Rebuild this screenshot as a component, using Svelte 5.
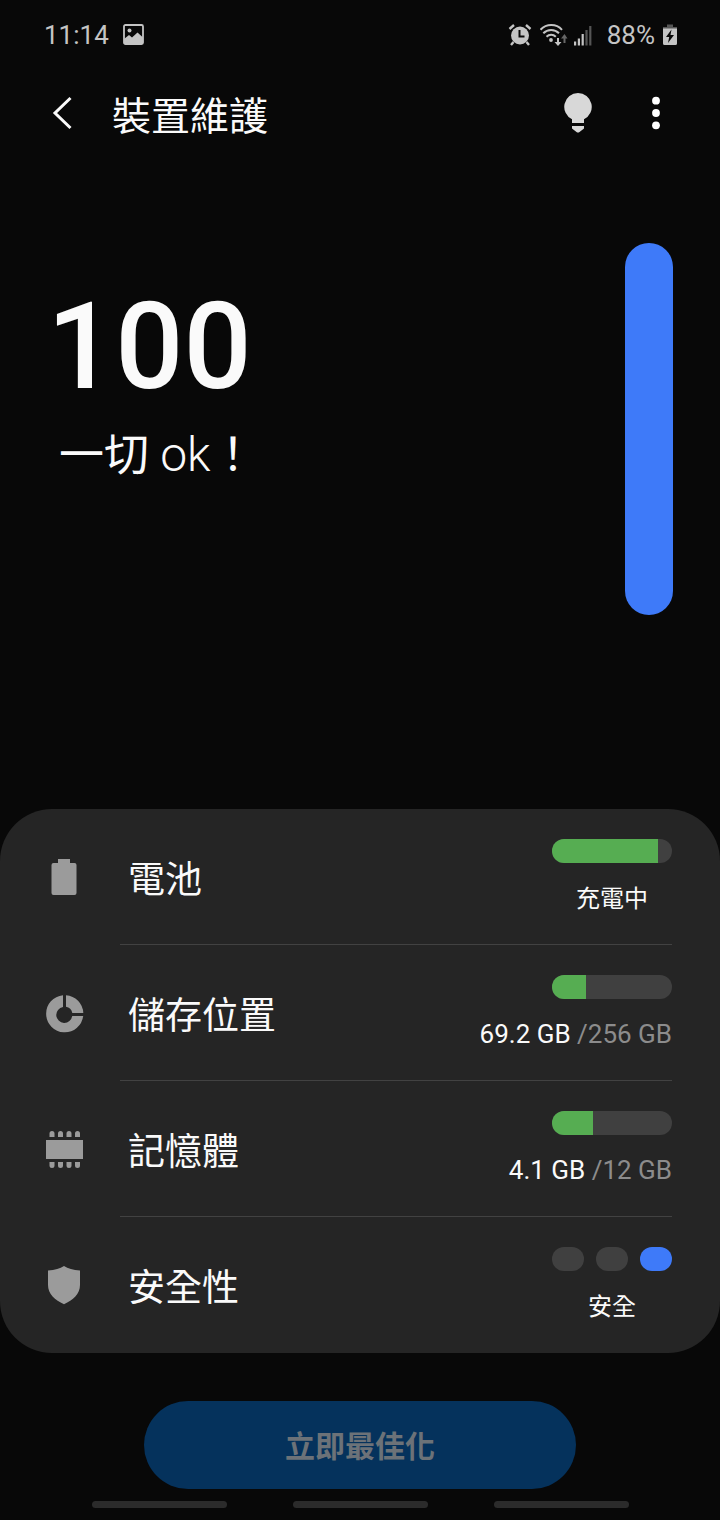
<script lang="ts">
  interface Item {
    id: string;
    label: string;
    icon: 'battery' | 'storage' | 'memory' | 'shield';
    percent?: number;
    level?: number;
    used?: string;
    total?: string;
    status?: string;
  }

  const items: Item[] = [
    { id: 'battery', label: '電池', icon: 'battery', percent: 88, status: '充電中' },
    { id: 'storage', label: '儲存位置', icon: 'storage', percent: 28, used: '69.2 GB', total: '256 GB' },
    { id: 'memory', label: '記憶體', icon: 'memory', percent: 34, used: '4.1 GB', total: '12 GB' },
    { id: 'security', label: '安全性', icon: 'shield', level: 2, status: '安全' },
  ];

  let score = $state(100);
  let optimized = $derived(score === 100);
</script>

<div class="screen">
  <div class="statusbar">
    <span>11:14</span>
    <svg class="picture" width="22" height="22" viewBox="0 0 22 22">
      <rect x="1" y="1" width="19" height="19" rx="1.5" fill="none" stroke="#c4c4c4" stroke-width="1.8" />
      <circle cx="6.5" cy="6.6" r="2" fill="#c4c4c4" />
      <path d="M1 15l5-4 3 2.500 5.500-5 5.500 5V20H1z" fill="#c4c4c4" />
    </svg>
    <span class="spacer"></span>
    <svg width="24" height="24" viewBox="0 0 24 24">
      <circle cx="12" cy="12.500" r="9" fill="#c4c4c4" />
      <path d="M11.500 7v6.500h5" fill="none" stroke="#080808" stroke-width="2" />
      <path d="M1.500 6l4.500-4M22.500 6l-4.500-4M5.500 19L3 22M18.500 19l2.500 3" stroke="#c4c4c4" stroke-width="2.400" />
    </svg>
    <svg class="wifi" width="28" height="24" viewBox="0 0 28 24">
      <g fill="none" stroke="#c4c4c4" stroke-width="2">
        <path d="M0.500 6.800A14.500 14.500 0 0 1 22 6.800" />
        <path d="M3.300 10.300A11 11 0 0 1 19 10.300" />
        <path d="M6.500 13.700A6.800 6.800 0 0 1 15.800 13.700" />
      </g>
      <circle cx="11" cy="17" r="1.900" fill="#c4c4c4" />
      <path d="M17 15h2v4h2.500L18 23l-3.500-4H17z" fill="#c4c4c4" />
      <path d="M23.500 20h2v-4.500h2L24.500 11l-3.500 4.500h2.500z" fill="#666" />
    </svg>
    <svg width="20" height="24" viewBox="0 0 20 24">
      <path d="M1 18.500h2.200V22.500H1zM4.800 15.500H7V22.500H4.800zM8.600 11h2.200v11.500H8.600z" fill="#c4c4c4" />
      <path d="M12.400 7h2.200v15.500h-2.200zM16.200 3h2.200v19.500h-2.200z" fill="#555" />
    </svg>
    <span class="level">88%</span>
    <svg width="14" height="24" viewBox="0 0 14 24">
      <path d="M4 1.500h6V4h4v2H0V4h4z" fill="#555" />
      <path d="M0 5.500h14v15a1.500 1.500 0 0 1-1.500 1.500h-11A1.500 1.500 0 0 1 0 20.500z" fill="#c4c4c4" />
      <path d="M8.500 6.500L3 14h3.200L5 20l6-8H7.500z" fill="#080808" />
    </svg>
  </div>

  <header>
    <button class="icon-btn" aria-label="返回">
      <svg width="28" height="36" viewBox="0 0 28 36">
        <path d="M20.500 3L5 18l15.500 15" fill="none" stroke="#fafafa" stroke-width="3" />
      </svg>
    </button>
    <h1>裝置維護</h1>
    <button class="icon-btn" aria-label="提示">
      <svg width="28" height="40" viewBox="0 0 28 40">
        <path d="M14 0a13.800 13.800 0 0 1 6 26.200V30H8v-3.800A13.800 13.800 0 0 1 14 0zM8 33h12v2.500L15.500 39a2.500 2.500 0 0 1-3 0L8 35.500z" fill="#d8d8d8" />
      </svg>
    </button>
    <button class="icon-btn" aria-label="更多選項">
      <svg width="8" height="36" viewBox="0 0 8 36">
        <g fill="#fff">
          <circle cx="4" cy="5.700" r="3.900" />
          <circle cx="4" cy="18" r="3.900" />
          <circle cx="4" cy="30.300" r="3.900" />
        </g>
      </svg>
    </button>
  </header>

  <section class="hero">
    <div>
      <div class="score">{score}</div>
      <p class="message">一切 <span class="latin">ok</span>！</p>
    </div>
    <div class="gauge">
      <div class="gauge-fill" style="height: {score}%"></div>
    </div>
  </section>

  <ul class="card">
    {#each items as item (item.id)}
      <li>
        <button class="row">
          <svg width="40" height="40" viewBox="0 0 40 40" fill="#9b9b9b">
            {#if item.icon === 'battery'}
              <path d="M14 2h12v4h4.500a2 2 0 0 1 2 2v28a2 2 0 0 1-2 2h-21a2 2 0 0 1-2-2V8a2 2 0 0 1 2-2H14z" />
            {:else if item.icon === 'storage'}
              <path d="M19 2.200V14a8 8 0 1 0 9.200 9h11A18.600 18.600 0 1 1 19 2.200z" />
              <path d="M22 2.200A18.600 18.600 0 0 1 39.300 20H28.300A8 8 0 0 0 22 13.800z" />
            {:else if item.icon === 'memory'}
              <rect x="2" y="11" width="37" height="19" />
              {#each [5.5, 14, 22.5, 31] as x}
                <path d="M{x} 8V4.500a2.500 2.500 0 0 1 5 0V8zM{x} 33v3.500a2.500 2.500 0 0 0 5 0V33z" />
              {/each}
            {:else}
              <path d="M20 1c4 2.500 9 4 16 4.500V20c0 9-7 15-16 19.200C11 35 4 29 4 20V5.500C11 5 16 3.500 20 1z" />
            {/if}
          </svg>
          <span class="label">{item.label}</span>
          <span class="info">
            {#if item.percent !== undefined}
              <span class="bar"><span class="bar-fill" style="width: {item.percent}%"></span></span>
            {:else}
              <span class="levels">
                {#each [0, 1, 2] as n}
                  <span class="pill" class:active={n === item.level}></span>
                {/each}
              </span>
            {/if}
            {#if item.used}
              <span class="value">{item.used} <span class="total">/{item.total}</span></span>
            {:else}
              <span class="value status">{item.status}</span>
            {/if}
          </span>
        </button>
      </li>
    {/each}
  </ul>

  <button class="optimize" disabled={optimized}>立即最佳化</button>

  <div class="gestures">
    <span></span>
    <span></span>
    <span></span>
  </div>
</div>

<style>
  :global(body) {
    background: #080808;
  }
  .screen {
    min-height: 100vh;
    box-sizing: border-box;
    display: flex;
    flex-direction: column;
    background: #080808;
    color: #fafafa;
    font-family: Roboto, "Noto Sans CJK TC", sans-serif;
  }
  button {
    font: inherit;
    color: inherit;
    background: none;
    border: none;
    padding: 0;
    cursor: pointer;
  }
  svg {
    display: block;
    flex: none;
  }

  .statusbar {
    display: flex;
    align-items: center;
    height: 70px;
    padding: 0 43px 0 44px;
    color: #c4c4c4;
    font-size: 26px;
  }
  .picture {
    margin-left: 14px;
  }
  .spacer {
    flex: 1;
  }
  .wifi {
    margin: 0 5px 0 8px;
  }
  .level {
    margin: 0 8px 0 14px;
  }

  header {
    display: flex;
    align-items: center;
    height: 86px;
    padding: 0 40px;
  }
  .icon-btn {
    display: flex;
    align-items: center;
    justify-content: center;
    width: 48px;
    height: 48px;
  }
  .icon-btn + .icon-btn {
    margin-left: 30px;
  }
  h1 {
    flex: 1;
    margin: 0 0 0 24px;
    padding-top: 8px;
    font-size: 39px;
    font-weight: 400;
    line-height: 56px;
  }
  h1 + .icon-btn {
    margin-right: 0;
  }

  .hero {
    display: flex;
    justify-content: space-between;
    padding: 87px 47px 194px;
  }
  .score {
    margin-top: 44px;
    font-size: 120px;
    font-weight: 500;
    line-height: 120px;
  }
  .message {
    margin: 18px 0 0 12px;
    font-size: 45px;
    line-height: 60px;
  }
  .latin {
    font-size: 48px;
    font-weight: 300;
  }
  .gauge {
    display: flex;
    align-items: flex-end;
    width: 48px;
    height: 372px;
    border-radius: 24px;
    background: #404040;
    overflow: hidden;
  }
  .gauge-fill {
    width: 100%;
    background: #3e7af9;
  }

  .card {
    margin: 0;
    padding: 0;
    list-style: none;
    background: #252525;
    border-radius: 52px;
  }
  .row {
    position: relative;
    display: flex;
    align-items: center;
    width: 100%;
    height: 136px;
    padding: 0 48px 0 44px;
    text-align: left;
  }
  li + li .row::before {
    content: "";
    position: absolute;
    top: -1px;
    left: 120px;
    right: 48px;
    height: 1px;
    background: #424242;
  }
  .label {
    flex: 1;
    margin-left: 44px;
    padding-top: 8px;
    font-size: 37px;
    line-height: 56px;
  }
  .info {
    display: flex;
    flex-direction: column;
    align-items: flex-end;
    gap: 16px;
  }
  .bar {
    width: 120px;
    height: 24px;
    border-radius: 12px;
    background: #404040;
    overflow: hidden;
  }
  .bar-fill {
    display: block;
    height: 100%;
    background: #56ad52;
  }
  .levels {
    display: flex;
    gap: 12px;
  }
  .pill {
    width: 32px;
    height: 24px;
    border-radius: 12px;
    background: #404040;
  }
  .pill.active {
    background: #3e7af9;
  }
  .value {
    box-sizing: border-box;
    min-width: 120px;
    height: 36px;
    font-size: 26px;
    line-height: 38px;
    text-align: center;
    white-space: nowrap;
  }
  .status {
    font-size: 24px;
    line-height: 40px;
  }
  .total {
    color: #8c8c8c;
  }

  .optimize {
    align-self: center;
    width: 60%;
    height: 88px;
    margin-top: 48px;
    padding-bottom: 2px;
    border-radius: 44px;
    background: #05325c;
    font-size: 30px;
    font-weight: 700;
  }
  .optimize:disabled {
    color: #6c7278;
    cursor: default;
  }

  .gestures {
    display: flex;
    justify-content: center;
    gap: 66px;
    padding: 12px 0;
  }
  .gestures span {
    width: 135px;
    height: 7px;
    border-radius: 4px;
    background: #2b2b2b;
  }
</style>
